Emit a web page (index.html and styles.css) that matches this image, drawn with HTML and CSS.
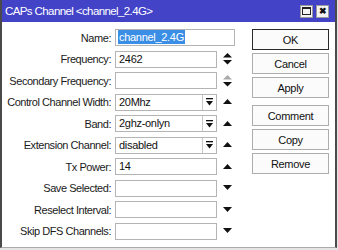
FILE: index.html
```html
<!DOCTYPE html>
<html lang="en">
<head>
    <meta charset="UTF-8">
    <title>CAPs Channel</title>
    <link rel="stylesheet" href="styles.css">
</head>
<body>
    <div class="window">
        <div class="titlebar">
            <span class="title">CAPs Channel &lt;channel_2.4G&gt;</span>
            <div class="title-buttons">
                <span class="tb-btn"><span class="max-box"></span></span>
                <span class="tb-btn close">&#x2716;</span>
            </div>
        </div>

        <div class="content">
            <div class="form">
                <div class="row">
                    <span class="label">Name:</span>
                    <div class="field wide"><span class="selected">channel_2.4G</span></div>
                </div>
                <div class="row">
                    <span class="label">Frequency:</span>
                    <div class="field">2462</div>
                    <svg class="icon" width="9" height="12" viewBox="0 0 9 12"><polygon points="4.5,0 9,4.5 0,4.5" fill="#111"/><polygon points="0,7 9,7 4.5,11.5" fill="#111"/></svg>
                </div>
                <div class="row">
                    <span class="label">Secondary Frequency:</span>
                    <div class="field"></div>
                    <svg class="icon" width="9" height="12" viewBox="0 0 9 12"><polygon points="4.5,0 9,4.5 0,4.5" fill="#aaa"/><polygon points="0,7 9,7 4.5,11.5" fill="#111"/></svg>
                </div>
                <div class="row">
                    <span class="label">Control Channel Width:</span>
                    <div class="field combo"><span class="value">20Mhz</span><span class="drop"><svg width="7" height="8" viewBox="0 0 7 8"><rect x="0" y="0" width="7" height="1.3" fill="#111"/><polygon points="0,3 7,3 3.5,7.5" fill="#111"/></svg></span></div>
                    <svg class="icon" width="9" height="6" viewBox="0 0 9 6"><polygon points="4.5,0 9,5 0,5" fill="#111"/></svg>
                </div>
                <div class="row">
                    <span class="label">Band:</span>
                    <div class="field combo"><span class="value">2ghz-onlyn</span><span class="drop"><svg width="7" height="8" viewBox="0 0 7 8"><rect x="0" y="0" width="7" height="1.3" fill="#111"/><polygon points="0,3 7,3 3.5,7.5" fill="#111"/></svg></span></div>
                    <svg class="icon" width="9" height="6" viewBox="0 0 9 6"><polygon points="4.5,0 9,5 0,5" fill="#111"/></svg>
                </div>
                <div class="row">
                    <span class="label">Extension Channel:</span>
                    <div class="field combo"><span class="value">disabled</span><span class="drop"><svg width="7" height="8" viewBox="0 0 7 8"><rect x="0" y="0" width="7" height="1.3" fill="#111"/><polygon points="0,3 7,3 3.5,7.5" fill="#111"/></svg></span></div>
                    <svg class="icon" width="9" height="6" viewBox="0 0 9 6"><polygon points="4.5,0 9,5 0,5" fill="#111"/></svg>
                </div>
                <div class="row">
                    <span class="label">Tx Power:</span>
                    <div class="field">14</div>
                    <svg class="icon" width="9" height="6" viewBox="0 0 9 6"><polygon points="4.5,0 9,5 0,5" fill="#111"/></svg>
                </div>
                <div class="row">
                    <span class="label">Save Selected:</span>
                    <div class="field"></div>
                    <svg class="icon" width="9" height="6" viewBox="0 0 9 6"><polygon points="0,0 9,0 4.5,5" fill="#111"/></svg>
                </div>
                <div class="row">
                    <span class="label">Reselect Interval:</span>
                    <div class="field"></div>
                    <svg class="icon" width="9" height="6" viewBox="0 0 9 6"><polygon points="0,0 9,0 4.5,5" fill="#111"/></svg>
                </div>
                <div class="row">
                    <span class="label">Skip DFS Channels:</span>
                    <div class="field"></div>
                    <svg class="icon" width="9" height="6" viewBox="0 0 9 6"><polygon points="0,0 9,0 4.5,5" fill="#111"/></svg>
                </div>
            </div>

            <div class="actions">
                <button class="default">OK</button>
                <button>Cancel</button>
                <button>Apply</button>
                <button class="group-start">Comment</button>
                <button>Copy</button>
                <button>Remove</button>
            </div>
        </div>
    </div>
</body>
</html>
```

FILE: styles.css
```css
* {
    box-sizing: border-box;
    margin: 0;
    padding: 0;
}

body {
    background-color: #e4e4e4;
    font-family: "Liberation Sans", Arial, sans-serif;
    font-size: 11px;
    color: #1a1a1a;
}

.window {
    width: 337px;
    border-left: 2px solid #4a4a4a;
    border-right: 2px solid #4a4a4a;
    border-bottom: 1px solid #aaaaaa;
    background-color: white;
}

.titlebar {
    height: 22px;
    background-color: #4343c8;
    color: white;
    display: flex;
    align-items: center;
    justify-content: space-between;
    padding: 0 6px 0 3px;
}

.title {
    font-size: 11.5px;
    letter-spacing: -0.6px;
}

.title-buttons {
    display: flex;
    gap: 3px;
}

.tb-btn {
    width: 13px;
    height: 13px;
    background-color: #f4f4f4;
    border: 1px solid #9a9a9a;
    display: flex;
    align-items: center;
    justify-content: center;
    color: #111;
    font-size: 9px;
    font-weight: bold;
}

.max-box {
    width: 9px;
    height: 8px;
    border: 1px solid #222;
    border-top-width: 2px;
}

.content {
    height: 225px;
    display: flex;
    padding-top: 7px;
}

.form {
    display: flex;
    flex-direction: column;
    gap: 4.5px;
}

.row {
    display: flex;
    align-items: center;
    height: 17px;
}

.label {
    width: 111px;
    text-align: right;
    padding-right: 2px;
    letter-spacing: -0.45px;
}

.field {
    width: 102px;
    height: 17px;
    border: 1px solid #b4b4b4;
    margin-left: 2px;
    padding-left: 3px;
    line-height: 15px;
    letter-spacing: -0.3px;
    color: #111;
}

.field.wide {
    width: 120px;
    padding-left: 2px;
}

.selected {
    background-color: #3a8ee6;
    color: white;
    padding: 1px 1px;
}

.combo {
    display: flex;
    padding-right: 0;
}

.combo .value {
    flex: 1;
}

.drop {
    width: 14px;
    border-left: 1px solid #c8c8c8;
    display: flex;
    align-items: center;
    justify-content: center;
}

.icon {
    margin-left: 6px;
}

.actions {
    margin-left: 17px;
    display: flex;
    flex-direction: column;
    gap: 3px;
}

.actions button {
    width: 77px;
    height: 21px;
    background-color: #fbfbfb;
    border: 1px solid #adadad;
    font-family: "Liberation Sans", Arial, sans-serif;
    font-size: 11px;
    letter-spacing: -0.3px;
    color: #111;
}

.actions button.default {
    border: 1px solid #2a2a2a;
}

.actions button.group-start {
    margin-top: 4px;
}
```
